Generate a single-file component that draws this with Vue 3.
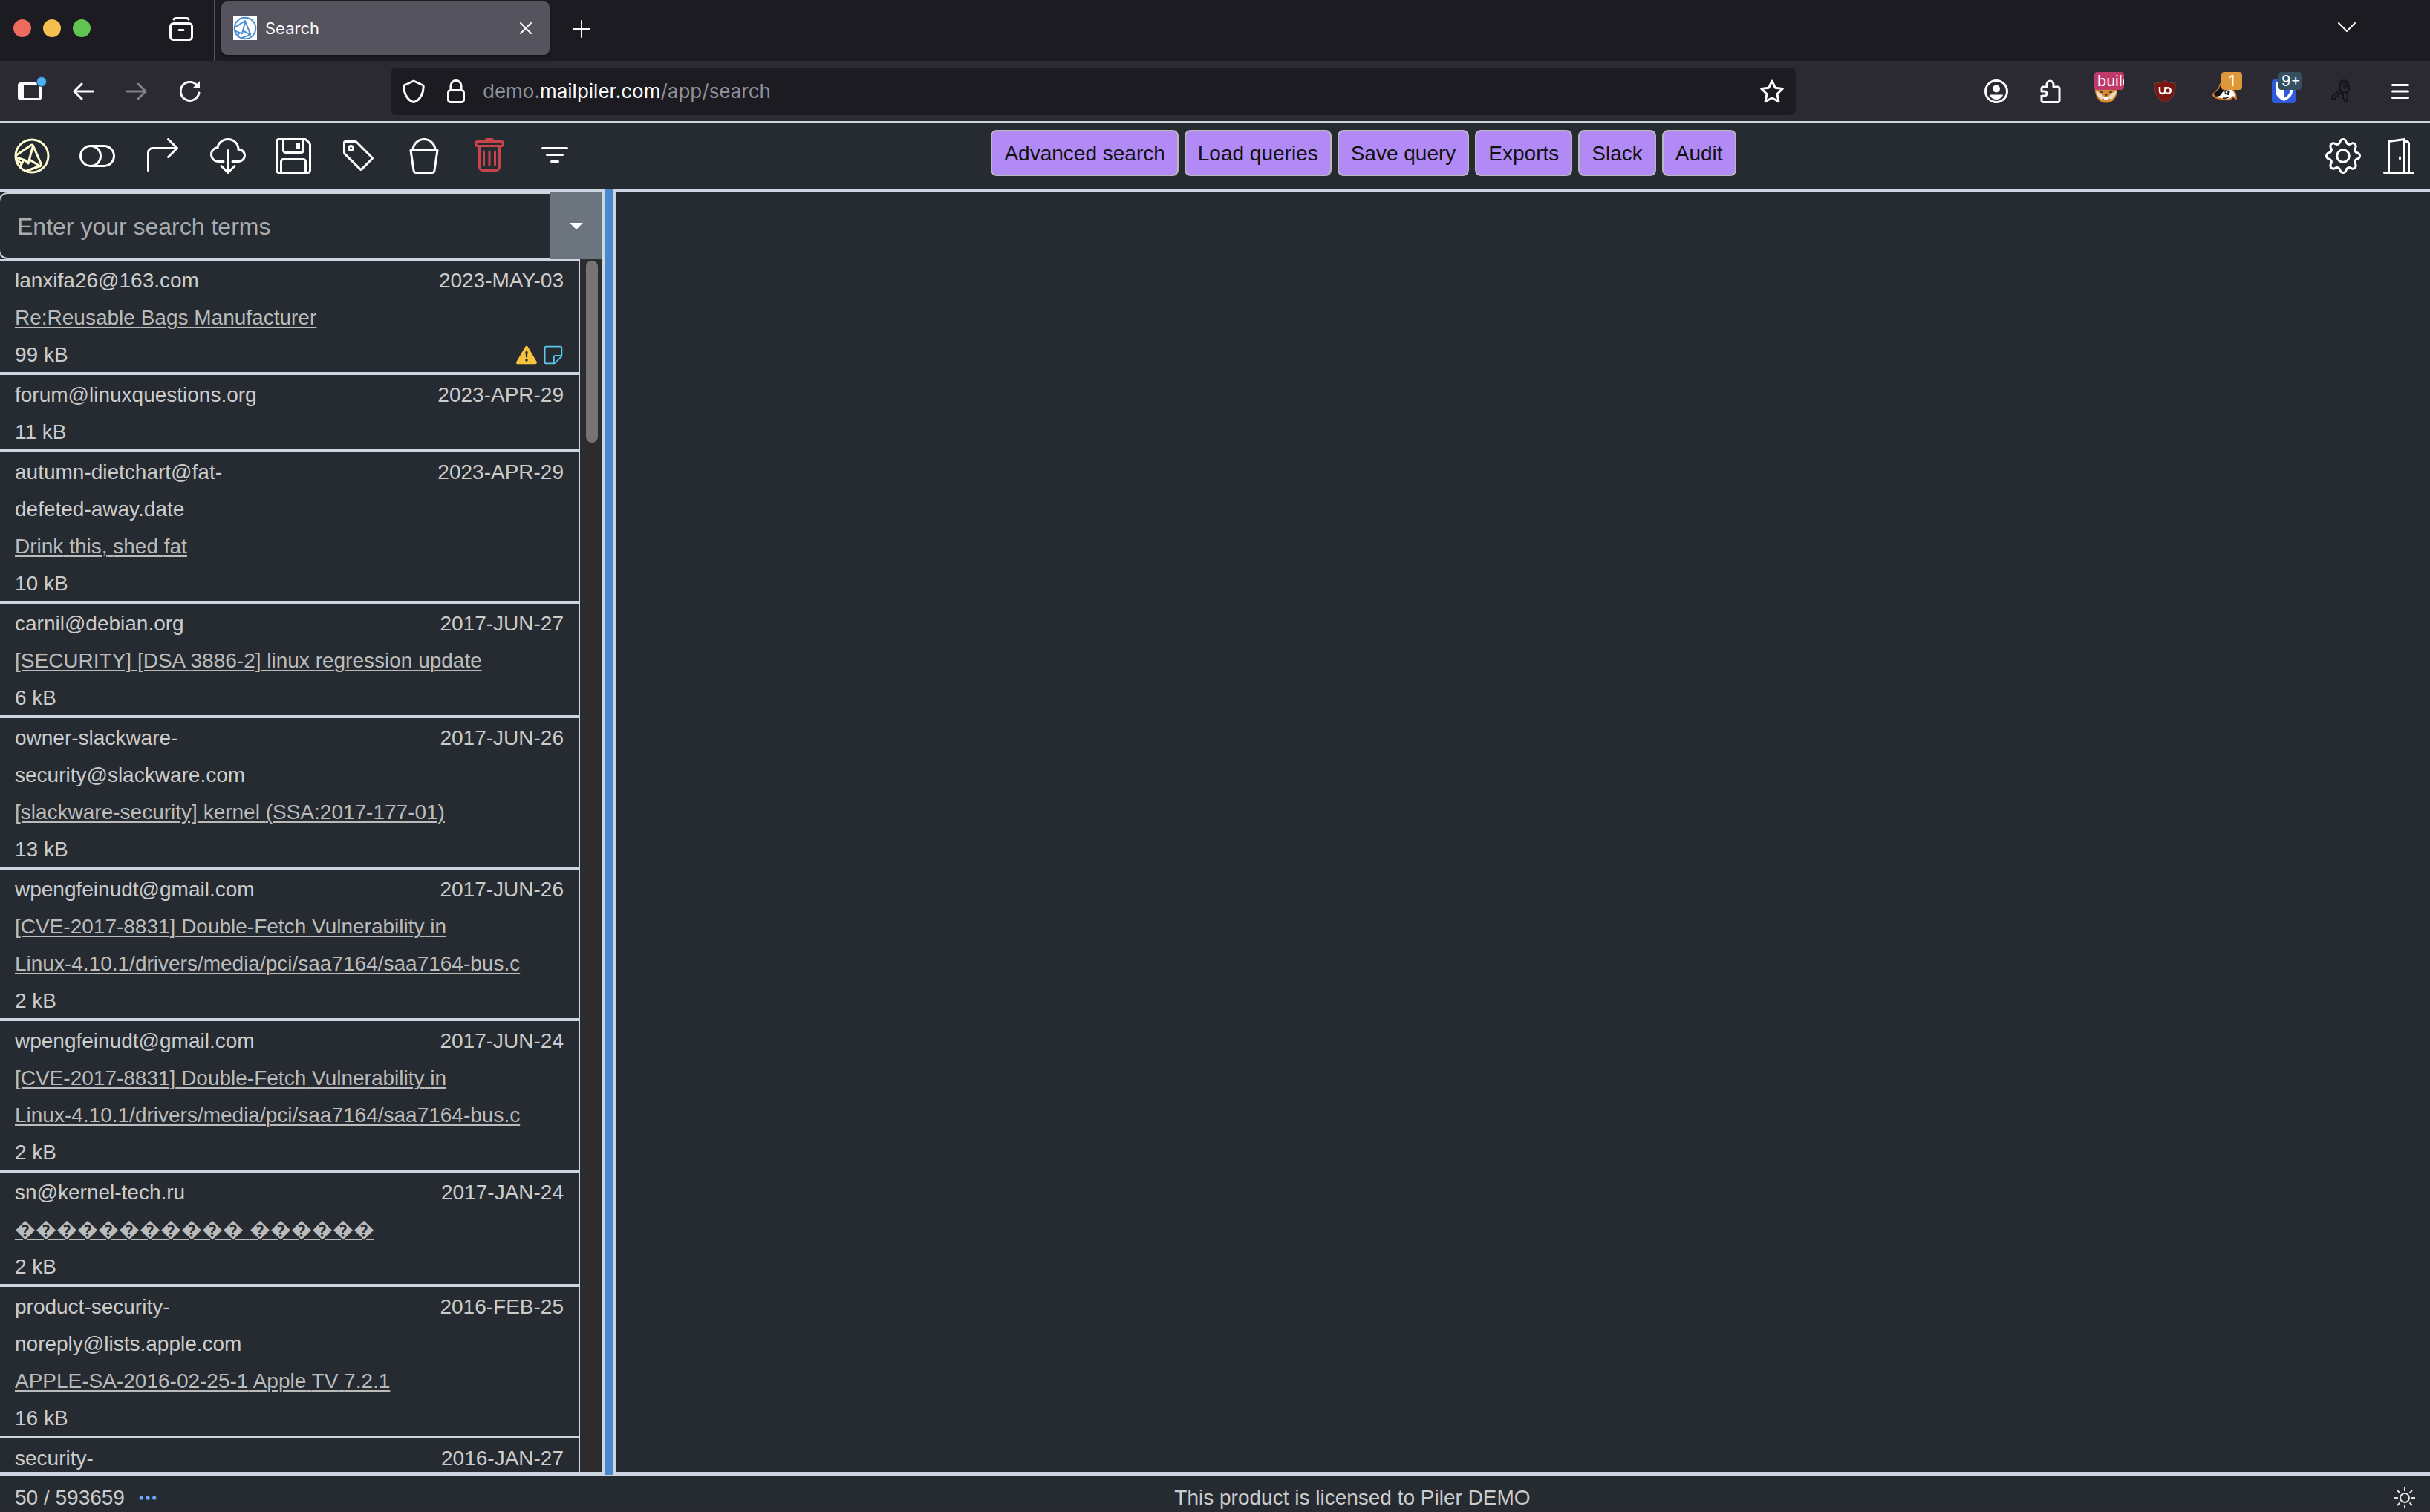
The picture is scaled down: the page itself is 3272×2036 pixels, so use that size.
<script setup>
import { ref } from 'vue'

const query = ref('')

const actions = [
  { label: 'Toggle selection', paths: ['M11 4a4 4 0 0 1 0 8H8a5 5 0 0 0 2-4 5 5 0 0 0-2-4zm-6 8a4 4 0 1 1 0-8 4 4 0 0 1 0 8M0 8a5 5 0 0 0 5 5h6a5 5 0 0 0 0-10H5a5 5 0 0 0-5 5'] },
  { label: 'Forward', paths: ['M14.854 4.854a.5.5 0 0 0 0-.708l-4-4a.5.5 0 0 0-.708.708L13.293 4H3.5A2.5 2.5 0 0 0 1 6.500v8a.5.5 0 0 0 1 0v-8A1.5 1.5 0 0 1 3.500 5h9.793l-3.147 3.146a.5.5 0 0 0 .708.708z'] },
  { label: 'Download', paths: ['M4.406 1.342A5.53 5.530 0 0 1 8 0c2.690 0 4.923 2 5.166 4.579C14.758 4.804 16 6.137 16 7.773 16 9.569 14.502 11 12.687 11H10a.5.5 0 0 1 0-1h2.688C13.979 10 15 8.988 15 7.773c0-1.216-1.020-2.228-2.313-2.228h-.5v-.5C12.188 2.825 10.328 1 8 1a4.530 4.530 0 0 0-2.941 1.100c-.757.652-1.153 1.438-1.153 2.055v.448l-.445.049C2.064 4.805 1 5.952 1 7.318 1 8.785 2.230 10 3.781 10H6a.5.5 0 0 1 0 1H3.781C1.708 11 0 9.366 0 7.318c0-1.763 1.266-3.223 2.942-3.593.143-.863.698-1.723 1.464-2.383', 'M7.646 15.854a.5.5 0 0 0 .708 0l3-3a.5.5 0 0 0-.708-.708L8.500 14.293V5.500a.5.5 0 0 0-1 0v8.793l-2.146-2.147a.5.5 0 0 0-.708.708z'] },
  { label: 'Save', paths: ['M11 2H9v3h2z', 'M1.500 0h11.586a1.500 1.500 0 0 1 1.060.440l1.415 1.414A1.500 1.500 0 0 1 16 2.914V14.500a1.500 1.500 0 0 1-1.500 1.500h-13A1.500 1.500 0 0 1 0 14.500v-13A1.500 1.500 0 0 1 1.500 0M1 1.500v13a.5.5 0 0 0 .5.5H2v-4.500A1.500 1.500 0 0 1 3.500 9h9a1.500 1.500 0 0 1 1.500 1.500V15h.5a.5.5 0 0 0 .5-.5V2.914a.5.5 0 0 0-.146-.353l-1.415-1.415A.5.5 0 0 0 13.086 1H13v4.500A1.500 1.500 0 0 1 11.500 7h-7A1.500 1.500 0 0 1 3 5.500V1H1.500a.5.5 0 0 0-.5.5m3 4a.5.5 0 0 0 .5.5h7a.5.5 0 0 0 .5-.5V1H4zM3 15h10v-4.500a.5.5 0 0 0-.5-.5h-9a.5.5 0 0 0-.5.5z'] },
  { label: 'Tag', paths: ['M6 4.500a1.500 1.500 0 1 1-3 0 1.500 1.500 0 0 1 3 0m-1 0a.5.5 0 1 0-1 0 .5.5 0 0 0 1 0', 'M2 1h4.586a1 1 0 0 1 .707.293l7 7a1 1 0 0 1 0 1.414l-4.586 4.586a1 1 0 0 1-1.414 0l-7-7A1 1 0 0 1 1 6.586V2a1 1 0 0 1 1-1m0 5.586 7 7L13.586 9l-7-7H2z'] },
  { label: 'Bucket', paths: ['M2.522 5H2a.5.5 0 0 0-.494.574l1.372 9.149A1.500 1.500 0 0 0 4.360 16h7.278a1.500 1.500 0 0 0 1.483-1.277l1.373-9.149A.5.5 0 0 0 14 5h-.522A5.500 5.500 0 0 0 2.522 5m1.005 0a4.500 4.500 0 0 1 8.945 0zm9.892 1-1.286 8.574a.5.5 0 0 1-.494.426H4.360a.5.5 0 0 1-.494-.426L2.580 6z'] },
  { label: 'Delete', danger: true, paths: ['M5.500 5.500A.5.5 0 0 1 6 6v6a.5.5 0 0 1-1 0V6a.5.5 0 0 1 .5-.5m2.500 0a.5.5 0 0 1 .5.5v6a.5.5 0 0 1-1 0V6a.5.5 0 0 1 .5-.5m3 .5a.5.5 0 0 0-1 0v6a.5.5 0 0 0 1 0z', 'M14.500 3a1 1 0 0 1-1 1H13v9a2 2 0 0 1-2 2H5a2 2 0 0 1-2-2V4h-.5a1 1 0 0 1-1-1V2a1 1 0 0 1 1-1H6a1 1 0 0 1 1-1h2a1 1 0 0 1 1 1h3.500a1 1 0 0 1 1 1zM4.118 4 4 4.059V13a1 1 0 0 0 1 1h6a1 1 0 0 0 1-1V4.059L11.882 4zM2.500 3h11V2h-11z'] },
  { label: 'Filter', paths: ['M6 10.500a.5.5 0 0 1 .5-.5h3a.5.5 0 0 1 0 1h-3a.5.5 0 0 1-.5-.5m-2-3a.5.5 0 0 1 .5-.5h7a.5.5 0 0 1 0 1h-7a.5.5 0 0 1-.5-.5m-2-3a.5.5 0 0 1 .5-.5h11a.5.5 0 0 1 0 1h-11a.5.5 0 0 1-.5-.5'] },
]

const menu = ['Advanced search', 'Load queries', 'Save query', 'Exports', 'Slack', 'Audit']

const mails = [
  { from: 'lanxifa26@163.com', date: '2023-MAY-03', subject: 'Re:Reusable Bags Manufacturer', size: '99 kB', flagged: true },
  { from: 'forum@linuxquestions.org', date: '2023-APR-29', size: '11 kB' },
  { from: 'autumn-dietchart@fat-defeted-away.date', date: '2023-APR-29', subject: 'Drink this, shed fat', size: '10 kB' },
  { from: 'carnil@debian.org', date: '2017-JUN-27', subject: '[SECURITY] [DSA 3886-2] linux regression update', size: '6 kB' },
  { from: 'owner-slackware-security@slackware.com', date: '2017-JUN-26', subject: '[slackware-security] kernel (SSA:2017-177-01)', size: '13 kB' },
  { from: 'wpengfeinudt@gmail.com', date: '2017-JUN-26', subject: '[CVE-2017-8831] Double-Fetch Vulnerability in Linux-4.10.1/drivers/media/pci/saa7164/saa7164-bus.c', size: '2 kB' },
  { from: 'wpengfeinudt@gmail.com', date: '2017-JUN-24', subject: '[CVE-2017-8831] Double-Fetch Vulnerability in Linux-4.10.1/drivers/media/pci/saa7164/saa7164-bus.c', size: '2 kB' },
  { from: 'sn@kernel-tech.ru', date: '2017-JAN-24', subject: '\uFFFD'.repeat(11) + ' ' + '\uFFFD'.repeat(6), size: '2 kB' },
  { from: 'product-security-noreply@lists.apple.com', date: '2016-FEB-25', subject: 'APPLE-SA-2016-02-25-1 Apple TV 7.2.1', size: '16 kB' },
  { from: 'security-', date: '2016-JAN-27' },
]
</script>

<template>
  <div class="window">
    <header class="tabs">
      <div class="lights"><i class="red"></i><i class="amber"></i><i class="green"></i></div>
      <button class="plain recent" aria-label="Recent browsing">
        <svg width="32" height="32" viewBox="0 0 32 32" fill="none" stroke="#fbfbfe" stroke-width="3" stroke-linecap="round"><rect x="1.500" y="8.500" width="29" height="22" rx="4" /><path d="M6 3c.5-1 1-1.500 3-1.500h14c2 0 2.500.5 3 1.500M13 17.500h6" /></svg>
      </button>
      <div class="tab">
        <svg class="favicon" width="32" height="32" viewBox="0 0 48 48"><path fill="#fff" d="M0 0h48v48H0z" /><g fill="none" stroke="#4a8cd0" stroke-width="3" stroke-linejoin="round"><circle cx="24" cy="24" r="21.500" /><path d="M4 22 24 9l11 28-19 7M24 12l-6 23-15-6M20 29l14 8M12 34l-4 7" /></g></svg>
        <span>Search</span>
        <button class="plain close" aria-label="Close tab"><svg width="16" height="16" viewBox="0 0 16 16" stroke="#fbfbfe" stroke-width="2" stroke-linecap="round"><path d="m1 1 14 14M15 1 1 15" /></svg></button>
      </div>
      <button class="plain newtab" aria-label="New tab"><svg width="24" height="24" viewBox="0 0 24 24" stroke="#fbfbfe" stroke-width="2" stroke-linecap="round"><path d="M12 1v22M1 12h22" /></svg></button>
      <button class="plain alltabs" aria-label="List all tabs"><svg width="24" height="14" viewBox="0 0 24 14" fill="none" stroke="#fbfbfe" stroke-width="2" stroke-linecap="round" stroke-linejoin="round"><path d="m1 1 11 11L23 1" /></svg></button>
    </header>

    <nav class="navbar">
      <div class="history">
        <button class="plain" aria-label="Sidebar"><svg width="40" height="40" viewBox="0 0 40 40"><path fill="#fbfbfe" fill-rule="evenodd" d="M4 8h24a4 4 0 0 1 4 4v16a4 4 0 0 1-4 4H4a4 4 0 0 1-4-4V12a4 4 0 0 1 4-4m4 3v18h20a1 1 0 0 0 1-1V12a1 1 0 0 0-1-1z" /><circle cx="32" cy="7" r="7" fill="#264b6b" /><circle cx="32" cy="7" r="6" fill="#4fb0f8" /></svg></button>
        <button class="plain back" aria-label="Back"><svg width="28" height="24" viewBox="0 0 28 24" fill="none" stroke="#fbfbfe" stroke-width="3" stroke-linecap="round" stroke-linejoin="round"><path d="M27 12H2M12 2 2 12l10 10" /></svg></button>
        <button class="plain forward" aria-label="Forward"><svg width="28" height="24" viewBox="0 0 28 24" fill="none" stroke="#807f86" stroke-width="3" stroke-linecap="round" stroke-linejoin="round"><path d="M1 12h25M16 2l10 10-10 10" /></svg></button>
        <button class="plain reload" aria-label="Reload"><svg width="28" height="28" viewBox="0 0 28 28"><path fill="none" stroke="#fbfbfe" stroke-width="3" stroke-linecap="round" d="M26 16A12.500 12.500 0 1 1 22 4.500" /><path fill="#fbfbfe" d="M27 0v9a1 1 0 0 1-1 1h-9z" /></svg></button>
      </div>
      <div class="urlbar">
        <svg width="30" height="32" viewBox="0 0 30 32" fill="none" stroke="#fbfbfe" stroke-width="3" stroke-linejoin="round"><path d="m15 2 13 6c1 9-4 20-13 22.500C6 28 1 17 2 8z" /></svg>
        <svg width="24" height="32" viewBox="0 0 24 32" fill="none" stroke="#fbfbfe" stroke-width="3"><rect x="1.500" y="14.500" width="21" height="16" rx="3" /><path d="M5 14V8.500a7 7 0 0 1 14 0V14" /></svg>
        <span class="address">demo.<b>mailpiler.com</b>/app/search</span>
        <svg class="star" width="32" height="32" viewBox="0 0 32 32" fill="none" stroke="#fbfbfe" stroke-width="3" stroke-linejoin="round"><path d="m16 2 4.300 9.200 10 1.300-7.300 7 1.900 10.300L16 24.800l-8.900 5L9 19.500l-7.300-7 10-1.300z" /></svg>
      </div>
      <div class="extensions">
        <svg width="32" height="32" viewBox="0 0 32 32" fill="#fbfbfe"><circle cx="16" cy="16" r="14.500" fill="none" stroke="#fbfbfe" stroke-width="3" /><circle cx="16" cy="12.500" r="5" /><path d="M7 20.500h18c-1 4-5 6.500-9 6.500s-8-2.500-9-6.500" /></svg>
        <svg class="puzzle" width="28" height="32" viewBox="0 0 28 32" fill="none" stroke="#fbfbfe" stroke-width="3" stroke-linejoin="round"><path d="M2 21v7.500c0 1 1 2 2 2h20c1 0 2-1 2-2V12c0-1-1-2-2-2h-6V6.500a4.500 4.500 0 0 0-9 0V10H4c-1 0-2 1-2 2v4h4a3 3 0 0 1 0 6H2" /></svg>
        <div class="ext build">
          <svg width="32" height="32" viewBox="0 0 32 32"><path fill="#d88a32" d="M1 8h30c1 10-2 18-8 22q-7 3-14 0C3 26 0 18 1 8" /><path fill="#e9ddca" d="M2 15c1 6 4 10 8 12l4-3-5-5zm28 0c-1 6-4 10-8 12l-4-3 5-5z" /><path fill="#fff" d="M12 23h8l-1 4h-6z" /><path fill="#5c4021" d="M8 15h4v3H8zm12 0h4v3h-4zm-6 5h4l-2 3zM14 12h4v2h-4z" /></svg>
          <em>build</em>
        </div>
        <div class="ext ublock">
          <svg width="32" height="32" viewBox="0 0 32 32"><path fill="#7b1510" stroke="#604448" d="M15 1c4 3 8 4 14 4 1 14-3 21-14 26C4 26 1 19 1 5c6 0 10-1 14-4" /><path fill="none" stroke="#fff" stroke-width="2.500" d="M8 10v5c0 3 1 4 3.500 4s4-2 4-4v-5" /><circle cx="19" cy="15" r="3.800" fill="none" stroke="#fff" stroke-width="2.500" /></svg>
        </div>
        <div class="ext badger">
          <svg width="34" height="32" viewBox="0 0 34 32"><path fill="#fff" stroke="#d67a2c" stroke-width="2" stroke-linejoin="round" d="M1 20 9 12q1-8 5-7l10 4 7 10 1 7-4-3q-4 5-10 4L6 25q-5-2-5-5" /><path fill="#111" d="M2 19 12 10l5 3-7 9-5 1q-3-1-3-4M16 14l8 1-2 6-5-1zM9 12q2-6 4-5l3 2z" /><circle cx="19" cy="17" r="1.500" fill="#fff" /><path fill="none" stroke="#111" stroke-width="1.500" d="M14 25q6 1 9-2" /></svg>
          <em>1</em>
        </div>
        <div class="ext warden">
          <svg width="32" height="32" viewBox="0 0 32 32"><rect width="32" height="32" rx="4" fill="#2d5bdc" /><path fill="#fff" d="M5 4h23v11c0 7-5 11-11.500 14C10 26 5 22 5 15z" /><path fill="#2d5bdc" d="M16.500 7H24v9c0 4-4 7-7.500 9z" /></svg>
          <em>9+</em>
        </div>
        <svg class="keys" width="26" height="32" viewBox="0 0 26 32" fill="none" stroke="#151519" stroke-width="2" stroke-linejoin="round"><circle cx="18" cy="11" r="6.500" /><circle cx="19" cy="10" r="2" /><path d="M11 9C10 0 20-1 23 6M16 18v7l2 2v3l2 1 2-3-1-2 1-2-1-7M12 14 2 22l-1 4h5v-3h3v-3l6-3" /></svg>
        <button class="plain burger" aria-label="Menu"><svg width="24" height="20" viewBox="0 0 24 20" stroke="#fbfbfe" stroke-width="3" stroke-linecap="round"><path d="M1.500 1.500h21M1.500 10h21M1.500 18.500h21" /></svg></button>
      </div>
    </nav>

    <div class="page">
      <div class="topbar">
        <div class="actions">
          <a href="#" aria-label="Home"><svg width="48" height="48" viewBox="0 0 48 48" fill="none" stroke="#fffdd0" stroke-width="3" stroke-linejoin="round" stroke-linecap="round"><circle cx="24" cy="24" r="22" /><path d="M3 23 22 10q2.500-2 3.500 0L36 34q1 2.500-1 3.500L17 44M25 12l-6 22-4-4-12-4M21 29l14 9M12 31l-4 8M3 29l7 5" /></svg></a>
          <button v-for="a in actions" :key="a.label" class="plain" :class="{ danger: a.danger }" :aria-label="a.label">
            <svg width="48" height="48" viewBox="0 0 16 16" fill="currentColor"><path v-for="p in a.paths" :key="p" :d="p" /></svg>
          </button>
        </div>
        <div class="menu"><button v-for="m in menu" :key="m">{{ m }}</button></div>
        <div class="account">
          <button class="plain" aria-label="Settings"><svg width="48" height="48" viewBox="0 0 16 16" fill="currentColor"><path d="M8 4.754a3.246 3.246 0 1 0 0 6.492 3.246 3.246 0 0 0 0-6.492M5.754 8a2.246 2.246 0 1 1 4.492 0 2.246 2.246 0 0 1-4.492 0" /><path d="M9.796 1.343c-.527-1.790-3.065-1.790-3.592 0l-.094.319a.873.873 0 0 1-1.255.520l-.292-.160c-1.640-.892-3.433.902-2.540 2.541l.159.292a.873.873 0 0 1-.520 1.255l-.319.094c-1.790.527-1.790 3.065 0 3.592l.319.094a.873.873 0 0 1 .520 1.255l-.160.292c-.892 1.640.901 3.434 2.541 2.540l.292-.159a.873.873 0 0 1 1.255.520l.094.319c.527 1.790 3.065 1.790 3.592 0l.094-.319a.873.873 0 0 1 1.255-.520l.292.160c1.640.893 3.434-.902 2.540-2.541l-.159-.292a.873.873 0 0 1 .520-1.255l.319-.094c1.790-.527 1.790-3.065 0-3.592l-.319-.094a.873.873 0 0 1-.520-1.255l.160-.292c.893-1.640-.902-3.433-2.541-2.540l-.292.159a.873.873 0 0 1-1.255-.520zm-2.633.283c.246-.835 1.428-.835 1.674 0l.094.319a1.873 1.873 0 0 0 2.693 1.115l.291-.160c.764-.415 1.600.420 1.184 1.185l-.159.292a1.873 1.873 0 0 0 1.116 2.692l.318.094c.835.246.835 1.428 0 1.674l-.319.094a1.873 1.873 0 0 0-1.115 2.693l.160.291c.415.764-.420 1.600-1.185 1.184l-.291-.159a1.873 1.873 0 0 0-2.693 1.116l-.094.318c-.246.835-1.428.835-1.674 0l-.094-.319a1.873 1.873 0 0 0-2.692-1.115l-.292.160c-.764.415-1.600-.420-1.184-1.185l.159-.291A1.873 1.873 0 0 0 1.945 8.930l-.319-.094c-.835-.246-.835-1.428 0-1.674l.319-.094A1.873 1.873 0 0 0 3.060 4.377l-.160-.292c-.415-.764.420-1.600 1.185-1.184l.292.159a1.873 1.873 0 0 0 2.692-1.115z" /></svg></button>
          <button class="plain" aria-label="Sign out"><svg width="48" height="48" viewBox="0 0 16 16" fill="currentColor"><path d="M8.500 10c-.276 0-.5-.448-.5-1s.224-1 .5-1 .5.448.5 1-.224 1-.5 1" /><path d="M10.828.122A.5.5 0 0 1 11 .500V1h.5A1.500 1.500 0 0 1 13 2.500V15h1.500a.5.5 0 0 1 0 1h-13a.5.5 0 0 1 0-1H3V1.500a.5.5 0 0 1 .430-.495l7-1a.5.5 0 0 1 .398.117M11.500 2H11v13h1V2.500a.5.5 0 0 0-.5-.5M4 1.934V15h6V1.077z" /></svg></button>
        </div>
      </div>

      <main class="split">
        <section class="results">
          <form class="search" @submit.prevent>
            <input v-model="query" type="text" placeholder="Enter your search terms" aria-label="Search terms">
            <button type="button" aria-label="Search options"></button>
          </form>
          <div class="scroller">
            <div class="list">
              <article v-for="(m, i) in mails" :key="i" class="mail">
                <div class="line"><span class="from">{{ m.from }}</span><time>{{ m.date }}</time></div>
                <a v-if="m.subject" href="#"><template v-for="(w, j) in m.subject.split(' ')" :key="j"><span class="word">{{ w }}</span>{{ ' ' }}</template></a>
                <div v-if="m.size" class="line">
                  <span>{{ m.size }}</span>
                  <span v-if="m.flagged" class="flags">
                    <svg width="28" height="28" viewBox="0 0 16 16" fill="#f5c33f"><path d="M8.982 1.566a1.130 1.130 0 0 0-1.960 0L.165 13.233c-.457.778.091 1.767.980 1.767h13.713c.889 0 1.438-.990.980-1.767zM8 5c.535 0 .954.462.900.995l-.350 3.507a.552.552 0 0 1-1.100 0L7.100 5.995A.905.905 0 0 1 8 5m.002 6a1 1 0 1 1 0 2 1 1 0 0 1 0-2" /></svg>
                    <svg width="28" height="28" viewBox="0 0 16 16" fill="#5bc8f0"><path d="M2.500 1A1.500 1.500 0 0 0 1 2.500v11A1.500 1.500 0 0 0 2.500 15h6.086a1.500 1.500 0 0 0 1.060-.440l4.915-4.914A1.500 1.500 0 0 0 15 8.586V2.500A1.500 1.500 0 0 0 13.500 1zM2 2.500a.5.5 0 0 1 .5-.5h11a.5.5 0 0 1 .5.5V8H9.500A1.500 1.500 0 0 0 8 9.500V14H2.500a.5.5 0 0 1-.5-.5zm7 11.293V9.500a.5.5 0 0 1 .5-.5h4.293z" /></svg>
                  </span>
                </div>
              </article>
            </div>
            <div class="track"><div class="thumb"></div></div>
          </div>
        </section>
        <div class="divider"></div>
        <section class="preview"></section>
      </main>

      <footer>
        <div class="count"><span>50 / 593659</span><a href="#" aria-label="More"><svg width="28" height="28" viewBox="0 0 16 16" fill="#6ea8fe"><path d="M3 9.500a1.500 1.500 0 1 1 0-3 1.500 1.500 0 0 1 0 3m5 0a1.500 1.500 0 1 1 0-3 1.500 1.500 0 0 1 0 3m5 0a1.500 1.500 0 1 1 0-3 1.500 1.500 0 0 1 0 3" /></svg></a></div>
        <div class="license">This product is licensed to Piler DEMO</div>
        <button class="plain theme" aria-label="Theme"><svg width="28" height="28" viewBox="0 0 28 28" fill="none" stroke="#dfe3e0" stroke-width="2"><circle cx="14" cy="14" r="6" /><path d="M14 0v5M14 23v5M0 14h5M23 14h5M4 4l3.500 3.500M20.500 20.500 24 24M4 24l3.500-3.500M20.500 7.500 24 4" /></svg></button>
      </footer>
    </div>
  </div>
</template>

<style>
body { margin: 0; background: #2b2a33; overflow: hidden; }
</style>

<style scoped>
* { box-sizing: border-box; }
svg { display: block; flex: none; }
.window { display: flex; flex-direction: column; height: 100vh; color: #ccc; font: 28px/50px "Liberation Sans", Arial, sans-serif; }
.plain { padding: 0; border: 0; background: none; color: #fff; font: inherit; display: block; }

.tabs { display: flex; align-items: center; flex: none; height: 82px; background: #1c1b22; font-family: Inter, sans-serif; }
.lights { display: flex; gap: 16px; padding: 0 0 6px 18px; }
.lights i { width: 24px; height: 24px; border-radius: 50%; }
.red { background: #ec6a5e; }
.amber { background: #f4bf4f; }
.green { background: #61c554; }
.recent { margin-left: 106px; padding-bottom: 4px; }
.tab { display: flex; align-items: center; width: 442px; height: 72px; margin: 0 0 6px 38px; padding: 0 24px 0 16px; border-radius: 8px; background: #54535e; color: #fbfbfe; font-size: 22px; position: relative; box-shadow: 0 1px 4px #0008; }
.tab::before { content: ""; position: absolute; left: -10px; top: -2px; width: 2px; height: 82px; background: #54535e; }
.tab span { margin-left: 11px; }
.close { margin-left: auto; }
.newtab { margin: 0 0 4px 31px; }
.alltabs { margin: 0 100px 8px auto; }

.navbar { display: flex; align-items: center; flex: none; height: 81px; background: #2b2a33; font-family: Inter, sans-serif; }
.history { display: flex; align-items: center; width: 526px; padding-left: 24px; }
.back { margin-left: 34px; }
.forward { margin-left: 44px; }
.reload { margin-left: 44px; }
.urlbar { display: flex; align-items: center; flex: 1; height: 64px; padding: 0 16px; border-radius: 8px; background: #1c1b22; }
.urlbar svg + svg { margin-left: 30px; }
.address { margin-left: 24px; color: #8f8e95; font-size: 26px; }
.address b { color: #fbfbfe; font-weight: 400; }
.star { margin-left: auto; }
.extensions { display: flex; align-items: center; width: 854px; padding: 0 28px 0 254px; }
.puzzle { margin: 0 45px 0 43px; }
.ext { position: relative; width: 32px; margin-right: 48px; }
.ublock { margin-right: 47px; }
.ext em { position: absolute; top: -10px; right: -8px; height: 24px; padding: 0 4px; border-radius: 4px; color: #fff; font: 20px/24px Inter, sans-serif; overflow: hidden; }
.build em { width: 40px; background: #c03a68; }
.badger em { width: 28px; text-align: center; background: #de973b; }
.warden em { width: 31px; background: #34505f; }
.burger { margin-left: auto; }

.page { display: flex; flex-direction: column; flex: 1; min-height: 0; border-top: 2px solid #cdd5e0; background: #262b31; margin-bottom: 1px; }
.topbar { display: grid; grid-template-columns: 25% 1fr 418px; align-items: center; flex: none; height: 94px; border-bottom: 4px solid #cdd5e0; }
.actions { display: flex; gap: 40px; padding-left: 19px; }
.actions .danger { color: #c9434a; }
.menu { display: flex; justify-content: center; gap: 8px; padding-bottom: 8px; }
.menu button { height: 62px; padding: 2px 16px 0; border: 2px solid #b9b9b9; border-radius: 8px; background: #b18af6; color: #111; font: inherit; line-height: 56px; white-space: nowrap; }
.account { display: flex; justify-content: flex-end; gap: 27px; padding-right: 18px; }

.split { display: flex; flex: 1; min-height: 0; }
.results { display: flex; flex-direction: column; width: 811px; flex: none; }
.search { display: flex; flex: none; height: 90px; }
.search input { flex: 1; min-width: 0; margin-left: -2px; padding: 2px 23px 0; border: 2px solid #cdd5e0; border-right: 0; border-radius: 12px 0 0 12px; background: transparent; color: #ccc; font: 32px "Liberation Sans", Arial, sans-serif; }
.search input::placeholder { color: #a9abae; opacity: 1; }
.search button { display: flex; align-items: center; justify-content: center; width: 70px; padding: 0; border: 0; background: #6c757d; }
.search button::after { content: ""; border: 9px solid transparent; border-top-color: #fff; border-bottom: 0; }
.scroller { display: flex; flex: 1; min-height: 0; }
.list { flex: 1; min-width: 0; overflow: hidden; border-right: 2px solid #cdd5e0; }
.mail { padding: 2px 20px 0; border: solid #cdd5e0; border-width: 2px 0; }
.mail > :last-child { margin-bottom: -2px; }
.mail a { display: block; color: #bbb; text-decoration: underline; text-decoration-thickness: 2px; text-underline-offset: 3px; }
.word { white-space: nowrap; }
.line { display: flex; justify-content: space-between; }
.from { max-width: 350px; }
.flags { display: flex; align-items: center; gap: 8px; }
.track { width: 30px; padding: 2px 6px 0 8px; background: #2c2c2c; }
.thumb { height: 15%; border-radius: 8px; background: #757575; }
.divider { width: 18px; flex: none; margin-top: -4px; border: solid #cdd5e0; border-width: 0 4px; background: #4a89cb; position: relative; }
.divider::after { content: ""; position: absolute; left: 0; right: 0; bottom: -4px; height: 4px; background: #4a89cb; }
.preview { flex: 1; }

footer { display: grid; grid-template-columns: 25% 1fr 448px; align-items: center; flex: none; height: 53px; padding-top: 11px; border-top: 6px solid #cdd5e0; line-height: 36px; }
.count { display: flex; align-items: center; gap: 17px; padding-left: 20px; }
.license { text-align: center; }
.theme { justify-self: end; margin-right: 20px; }
</style>
